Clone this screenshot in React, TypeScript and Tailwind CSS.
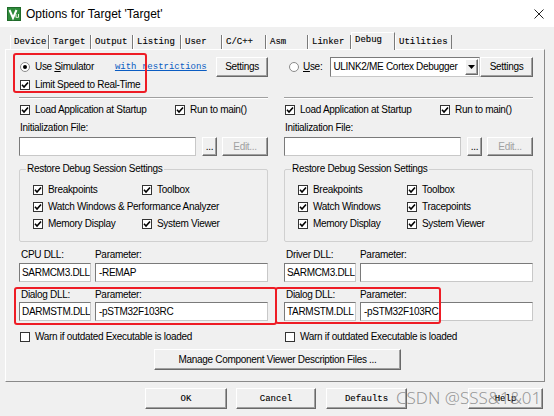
import type { ReactNode } from "react";

// Options for Target dialog, Debug tab

const sans = "font-['Liberation_Sans',Arial,sans-serif] text-[10px] tracking-[-0.3px] leading-[12px]";
const mono = "font-['Liberation_Mono','Courier_New',monospace] text-[9px] tracking-normal [-webkit-text-stroke:0.12px_#000]";

const tabs: { label: string; w: string }[] = [
  { label: "Device", w: "w-[39px]" },
  { label: "Target", w: "w-[42px]" },
  { label: "Output", w: "w-[42px]" },
  { label: "Listing", w: "w-[48px]" },
  { label: "User", w: "w-[41px]" },
  { label: "C/C++", w: "w-[44px]" },
  { label: "Asm", w: "w-[42px]" },
  { label: "Linker", w: "w-[43px]" },
  { label: "Debug", w: "w-[44px]" },
  { label: "Utilities", w: "w-[57px]" },
];

function Check({ checked = true }: { checked?: boolean }) {
  return (
    <span className="w-[10px] h-[10px] shrink-0 bg-white border border-[#333] flex items-center justify-center">
      {checked && (
        <svg width="8" height="8" viewBox="0 0 8 8">
          <path d="M1 3.8 L3 6 L7 1.5" fill="none" stroke="#000" strokeWidth="1.6" />
        </svg>
      )}
    </span>
  );
}

function CheckLabel({ label, checked = true, className = "" }: { label: string; checked?: boolean; className?: string }) {
  return (
    <div className={`flex items-center gap-[5px] whitespace-nowrap ${className}`}>
      <Check checked={checked} />
      <span>{label}</span>
    </div>
  );
}

function Radio({ on = false }: { on?: boolean }) {
  return (
    <span className="w-[10px] h-[10px] shrink-0 rounded-full bg-white border border-[#8a8a8a] flex items-center justify-center">
      {on && <span className="w-[4px] h-[4px] rounded-full bg-black" />}
    </span>
  );
}

function WinButton({ children, className = "", disabled = false }: { children: ReactNode; className?: string; disabled?: boolean }) {
  return (
    <div
      className={`flex items-center justify-center whitespace-nowrap bg-[#f0f0f0] border border-t-white border-l-white border-r-[#696969] border-b-[#696969] shadow-[inset_-1px_-1px_0_#a0a0a0] ${disabled ? "text-[#a0a0a0]" : ""} ${className}`}
    >
      {children}
    </div>
  );
}

function Field({ value = "", className = "" }: { value?: string; className?: string }) {
  return (
    <div className={`h-[19px] bg-white border border-[#c8c8c8] border-t-[#7a7a7a] border-l-[#7a7a7a] flex items-center pl-[2px] whitespace-nowrap overflow-hidden ${className}`}>
      {value}
    </div>
  );
}

function Etched() {
  return <div className="h-[2px] border-t border-[#a0a0a0] border-b border-b-white" />;
}

type ColumnProps = {
  top: ReactNode;
  restore: string[][];
  driverLabel: string;
  driverDll: string;
  driverParam: string;
  dialogDll: string;
};

function Column({ top, restore, driverLabel, driverDll, driverParam, dialogDll }: ColumnProps) {
  return (
    <div className="flex flex-col">
      <div className="h-[47px] pt-[7px]">{top}</div>
      <Etched />

      <div className="mt-[4px] h-[14px] flex items-center pl-[1px]">
        <CheckLabel label="Load Application at Startup" className="w-[155px]" />
        <CheckLabel label="Run to main()" />
      </div>
      <div className="mt-[4px] h-[14px] flex items-center pl-[1px]">Initialization File:</div>
      <div className="mt-[2px] flex gap-[6px]">
        <Field className="w-[177px]" />
        <WinButton className="w-[15px] h-[19px]">...</WinButton>
        <WinButton disabled className="flex-1 h-[19px] ml-[-1px]">Edit...</WinButton>
      </div>

      <fieldset className="mt-[7px] border border-[#d0d0d0] rounded-[2px] p-0 m-0">
        <legend className="ml-[6px] px-[1px] leading-[12px]">Restore Debug Session Settings</legend>
        <div className="pl-[13px] pt-[6px] pb-[9px]">
          {restore.map((row) => (
            <div key={row[0]} className="h-[17px] flex items-center">
              <CheckLabel label={row[0]} className="w-[109px]" />
              {row[1] && <CheckLabel label={row[1]} />}
            </div>
          ))}
        </div>
      </fieldset>

      <div className="mt-[6px] h-[14px] grid grid-cols-[72px_1fr] gap-x-[4px] items-center">
        <span className="pl-[2px]">{driverLabel}</span>
        <span>Parameter:</span>
      </div>
      <div className="mt-[1px] grid grid-cols-[72px_1fr] gap-x-[4px]">
        <Field value={driverDll} />
        <Field value={driverParam} className="pl-[3px]" />
      </div>
      <div className="mt-[6px] h-[14px] grid grid-cols-[72px_1fr] gap-x-[4px] items-center">
        <span className="pl-[2px]">Dialog DLL:</span>
        <span>Parameter:</span>
      </div>
      <div className="grid grid-cols-[72px_1fr] gap-x-[4px]">
        <Field value={dialogDll} />
        <Field value="-pSTM32F103RC" className="pl-[3px]" />
      </div>

      <div className="mt-[9px] h-[14px] flex items-center pl-[1px]">
        <CheckLabel label="Warn if outdated Executable is loaded" checked={false} />
      </div>
    </div>
  );
}

function KeilIcon() {
  return (
    <svg width="14" height="14" viewBox="0 0 14 14">
      <rect x="0.5" y="0.5" width="13" height="13" fill="#2e8b3a" stroke="#1f6a2a" />
      <path d="M2.5 3 L6 11 L9.5 3" fill="none" stroke="#fff" strokeWidth="2" />
      <path d="M9 7 L9 10.5 M9 10 Q10 11 11.5 10 M11.5 7 L11.5 10.5" fill="none" stroke="#e8f5e0" strokeWidth="1" />
    </svg>
  );
}

export default function App() {
  const leftTop = (
    <div className="flex flex-col">
      <div className="h-[20px] flex items-center pl-[1px]">
        <Radio on />
        <span className="ml-[5px]">
          Use <span className="underline">S</span>imulator
        </span>
        <span className="font-['Liberation_Mono','Courier_New',monospace] text-[9px] tracking-normal ml-[21px] text-[#0a5cc2] underline">
          with restrictions
        </span>
        <WinButton className="ml-auto w-[52px] h-[20px]">Settings</WinButton>
      </div>
      <div className="mt-[1px] h-[14px] flex items-center pl-[1px]">
        <CheckLabel label="Limit Speed to Real-Time" />
      </div>
    </div>
  );

  const rightTop = (
    <div className="h-[20px] flex items-center pl-[5px]">
      <Radio />
      <span className="ml-[4px]">
        <span className="underline">U</span>se:
      </span>
      <div className="ml-[8px] w-[150px] h-[20px] bg-white border border-[#c8c8c8] border-t-[#7a7a7a] border-l-[#7a7a7a] flex items-center pl-[2px]">
        <span className="flex-1 whitespace-nowrap">ULINK2/ME Cortex Debugger</span>
        <WinButton className="w-[13px] h-[16px] mr-[1px]">
          <svg width="7" height="4" viewBox="0 0 7 4">
            <path d="M0 0 H7 L3.5 4 Z" fill="#000" />
          </svg>
        </WinButton>
      </div>
      <WinButton className="ml-auto w-[53px] h-[20px]">Settings</WinButton>
    </div>
  );

  return (
    <div className={`relative w-[554px] h-[416px] overflow-hidden bg-[#f0f0f0] text-black flex flex-col ${sans}`}>
      {/* Title bar */}
      <div className="h-[27px] shrink-0 bg-white flex items-center pl-[7px] pr-[10px]">
        <KeilIcon />
        <span className="ml-[5px] text-[12px] tracking-normal">Options for Target 'Target'</span>
        <svg className="ml-auto" width="10" height="10" viewBox="0 0 10 10">
          <path d="M0.5 0.5 L9.5 9.5 M9.5 0.5 L0.5 9.5" stroke="#222" strokeWidth="1" />
        </svg>
      </div>

      {/* Tabs */}
      <div className="h-[22px] shrink-0 flex items-end pl-[10px]">
        {tabs.map((t) =>
          t.label === "Debug" ? (
            <div
              key={t.label}
              className={`${t.w} ${mono} relative z-10 -mb-px h-[18px] pl-[3px] pt-[1px] bg-[#f0f0f0] border-l border-t border-l-white border-t-white border-r border-r-[#7a7a7a]`}
            >
              {t.label}
            </div>
          ) : (
            <div
              key={t.label}
              className={`${t.w} ${mono} h-[14px] pl-[3px] pt-[1px] border-l border-l-white border-r border-r-[#7a7a7a]`}
            >
              {t.label}
            </div>
          )
        )}
      </div>

      {/* Debug page */}
      <div className="ml-[5px] w-[540px] h-[333px] shrink-0 border border-t-white border-l-white border-r-[#8a8a8a] border-b-[#8a8a8a] flex flex-col">
        <div className="grid grid-cols-[249px_249px] gap-x-[16px] pl-[13px]">
          <Column
            top={leftTop}
            restore={[["Breakpoints", "Toolbox"], ["Watch Windows & Performance Analyzer"], ["Memory Display", "System Viewer"]]}
            driverLabel="CPU DLL:"
            driverDll="SARMCM3.DLL"
            driverParam="-REMAP"
            dialogDll="DARMSTM.DLL"
          />
          <Column
            top={rightTop}
            restore={[["Breakpoints", "Toolbox"], ["Watch Windows", "Tracepoints"], ["Memory Display", "System Viewer"]]}
            driverLabel="Driver DLL:"
            driverDll="SARMCM3.DLL"
            driverParam=""
            dialogDll="TARMSTM.DLL"
          />
        </div>
        <WinButton className="mt-[5px] ml-[148px] w-[247px] h-[21px]">Manage Component Viewer Description Files ...</WinButton>
      </div>

      {/* Dialog buttons */}
      <div className={`${mono} mt-[6px] h-[21px] flex pl-[145px]`}>
        <WinButton className="w-[82px] border-[#3a3a3a] border-t-[#3a3a3a] border-l-[#3a3a3a]">OK</WinButton>
        <WinButton className="ml-[9px] w-[80px]">Cancel</WinButton>
        <WinButton className="ml-[10px] w-[81px]">Defaults</WinButton>
        <WinButton className="ml-[61px] w-[75px]">Help</WinButton>
      </div>

      {/* annotations */}
      <div className="absolute left-[13px] top-[53px] w-[134px] h-[40px] border-2 border-[#ee1c25] rounded-[3px]" />
      <div className="absolute left-[14px] top-[287px] w-[263px] h-[38px] border-2 border-[#ee1c25] rounded-[3px]" />
      <div className="absolute left-[275px] top-[287px] w-[166px] h-[37px] border-2 border-[#ee1c25] rounded-[3px]" />
      <div className="absolute left-[396px] top-[387px] text-[17px] leading-[22px] tracking-normal font-light font-['Noto_Sans',sans-serif] text-[#8c8c8c]/90 whitespace-nowrap">
        CSDN @SSS&amp;1&amp;01
      </div>
    </div>
  );
}
